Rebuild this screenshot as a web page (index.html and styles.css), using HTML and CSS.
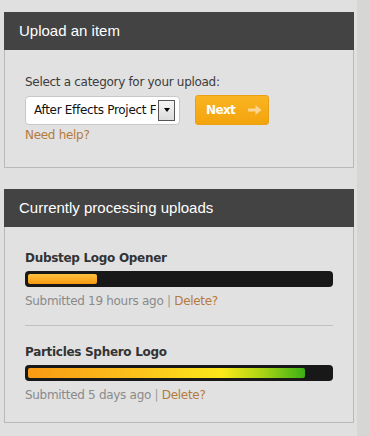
FILE: index.html
```html
<!DOCTYPE html>
<html lang="en">
<head>
  <meta charset="UTF-8">
  <title>Upload</title>
  <link rel="stylesheet" href="styles.css">
</head>
<body>
  <div class="page">

    <div class="panel">
      <h2 class="panel-head">Upload an item</h2>
      <div class="panel-body upload-body">
        <p class="label">Select a category for your upload:</p>
        <div class="upload-row">
          <div class="select">
            <span class="select-text">After Effects Project Files</span>
            <span class="select-btn"><span class="caret"></span></span>
          </div>
          <button class="next-btn">Next
            <svg width="14" height="12" viewBox="0 0 14 12"><path d="M0 4.5h7.5V1l6 5-6 5V7.5H0z" fill="#fcd690"/></svg>
          </button>
        </div>
        <a class="help" href="#">Need help?</a>
      </div>
    </div>

    <div class="panel">
      <h2 class="panel-head">Currently processing uploads</h2>
      <div class="panel-body list-body">
        <div class="item">
          <div class="item-title">Dubstep Logo Opener</div>
          <div class="bar"><div class="fill fill-orange" style="width: 69px"></div></div>
          <div class="meta">Submitted 19 hours ago <span class="sep">|</span> <a href="#">Delete?</a></div>
        </div>
        <div class="item">
          <div class="item-title">Particles Sphero Logo</div>
          <div class="bar"><div class="fill fill-rainbow" style="width: 277px"></div></div>
          <div class="meta">Submitted 5 days ago <span class="sep">|</span> <a href="#">Delete?</a></div>
        </div>
      </div>
    </div>

  </div>
</body>
</html>
```

FILE: styles.css
```css
body {
  margin: 0;
  background-color: #d6d6d4;
  font-family: "DejaVu Sans", Verdana, sans-serif;
  letter-spacing: -0.3px;
}
.page {
  width: 357px;
  min-height: 436px;
  background-color: #e0e0e0;
  padding: 12px 0 0 4px;
  box-sizing: border-box;
}
.panel {
  width: 350px;
  margin-bottom: 21px;
}
.panel-head {
  margin: 0;
  height: 38px;
  line-height: 38px;
  padding-left: 15px;
  background-color: #434343;
  color: #fff;
  font-family: "Liberation Sans", Arial, sans-serif;
  font-size: 15px;
  font-weight: normal;
  letter-spacing: 0;
}
.panel-body {
  background-color: #e1e1e1;
  border: 1px solid #b9b9b9;
  border-top: none;
  padding: 0 20px;
}
.upload-body {
  padding-top: 25px;
  padding-bottom: 25px;
}
.list-body {
  padding-top: 24px;
}
.label {
  margin: 0 0 6px 0;
  font-size: 12px;
  color: #3c3c3c;
}
.upload-row {
  display: flex;
  align-items: center;
  gap: 15px;
}
.select {
  width: 155px;
  height: 29px;
  box-sizing: border-box;
  background-color: #fff;
  border: 1px solid #c8c8c8;
  border-radius: 4px;
  display: flex;
  align-items: center;
  padding: 0 4px 0 8px;
  font-size: 12px;
  color: #111;
}
.select-text {
  flex: 1;
  overflow: hidden;
  white-space: nowrap;
  margin-right: 2px;
}
.select-btn {
  width: 15px;
  height: 19px;
  border: 1px solid #555;
  background: linear-gradient(#f4f4f4, #dcdcdc);
  display: flex;
  align-items: center;
  justify-content: center;
  flex-shrink: 0;
}
.caret {
  width: 0;
  height: 0;
  border-left: 3px solid transparent;
  border-right: 3px solid transparent;
  border-top: 4px solid #000;
}
.next-btn {
  width: 74px;
  height: 30px;
  border: 1px solid #eaa010;
  border-radius: 3px;
  background: linear-gradient(#fab422, #f3a40c);
  color: #fff;
  font-family: "DejaVu Sans", Verdana, sans-serif;
  font-weight: bold;
  font-size: 12px;
  letter-spacing: -0.6px;
  display: flex;
  align-items: center;
  gap: 13px;
  padding: 0 0 0 10px;
  cursor: pointer;
}
.help {
  display: block;
  margin-top: 3px;
  font-size: 12px;
  color: #b57b3d;
  text-decoration: none;
}
.item {
  padding-bottom: 17px;
}
.item + .item {
  border-top: 1px solid #c0c0c0;
  padding-top: 19px;
  padding-bottom: 20px;
}
.item-title {
  font-size: 12px;
  font-weight: bold;
  color: #333;
}
.bar {
  margin-top: 6px;
  height: 16px;
  background-color: #181818;
  border-radius: 4px;
  padding: 3px;
  box-sizing: border-box;
}
.fill {
  height: 10px;
  border-radius: 2px;
}
.fill-orange {
  background: linear-gradient(#fdc040, #f59a10);
}
.fill-rainbow {
  background: linear-gradient(to right, #f99a14, #fbc21c 40%, #fbe81a 70%, #a7d414 85%, #3cb016);
}
.meta {
  margin-top: 7px;
  font-size: 12px;
  color: #8a8a8a;
}
.sep {
  color: #9a9a9a;
}
.meta a {
  color: #b57b3d;
  text-decoration: none;
}
```
